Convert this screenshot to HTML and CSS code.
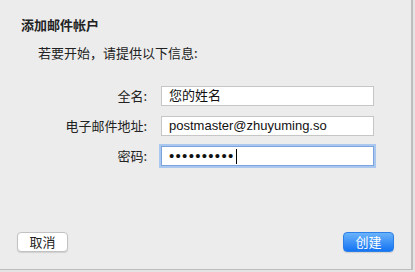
FILE: index.html
```html
<!DOCTYPE html>
<html lang="zh-CN">
<head>
  <meta charset="UTF-8" />
  <meta name="viewport" content="width=device-width, initial-scale=1.0"/>
  <title>添加邮件帐户</title>
  <link rel="stylesheet" href="styles.css">
</head>
<body>
  <div class="dialog">
    <div class="title">添加邮件帐户</div>
    <div class="intro">若要开始，请提供以下信息:</div>

    <div class="form">
      <div class="label">全名:</div>
      <div class="field">您的姓名</div>

      <div class="label">电子邮件地址:</div>
      <div class="field">postmaster@zhuyuming.so</div>

      <div class="label">密码:</div>
      <div class="field focus"><span class="dots">••••••••••</span><span class="caret"></span></div>
    </div>

    <div class="buttons">
      <button class="button">取消</button>
      <button class="button primary">创建</button>
    </div>
  </div>
</body>
</html>
```

FILE: styles.css
```css
body {
  margin: 0;
  background: #e4e4e4;
  font-family: "Noto Sans CJK SC", "Liberation Sans", sans-serif;
  color: #222;
}
.dialog {
  box-sizing: border-box;
  width: 413px;
  height: 270px;
  background: #ececec;
  border-right: 2px solid #bdbdbd;
  border-bottom: 1px solid #bdbdbd;
  padding: 16px 16px 17px 17px;
  display: flex;
  flex-direction: column;
}
.title {
  font-size: 13px;
  line-height: 18px;
  font-weight: bold;
  margin-left: 4px;
}
.intro {
  font-size: 13px;
  line-height: 18px;
  margin: 10px 0 0 21px;
}
.form {
  display: grid;
  grid-template-columns: 130px 213px;
  column-gap: 14px;
  row-gap: 10px;
  margin-top: 24px;
}
.label {
  font-size: 13px;
  line-height: 20px;
  text-align: right;
}
.field {
  box-sizing: border-box;
  height: 20px;
  background: #fff;
  border: 1px solid #c6c6c6;
  padding: 0 7px;
  font-family: "Liberation Sans", "Noto Sans CJK SC", sans-serif;
  font-size: 13px;
  line-height: 18px;
  color: #111;
  display: flex;
  align-items: center;
}
.field.focus {
  border-color: #7ba4dc;
  box-shadow: 0 0 0 2px #a9c7ef;
}
.dots {
  letter-spacing: 1.3px;
  font-size: 15px;
}
.caret {
  width: 1px;
  height: 15px;
  background: #000;
  margin-left: 1px;
}
.buttons {
  margin-top: auto;
  display: flex;
  justify-content: space-between;
}
.button {
  width: 51px;
  height: 20px;
  padding: 0;
  font-family: "Noto Sans CJK SC", sans-serif;
  font-size: 13px;
  line-height: 18px;
  color: #222;
  background: #fff;
  border: 1px solid #c2c2c2;
  border-radius: 4px;
  box-shadow: 0 1px 1px rgba(0, 0, 0, 0.12);
}
.button.primary {
  color: #fff;
  background: linear-gradient(#6ab3fb, #1474f3);
  border-color: #2d7fe8;
  margin-right: 1px;
}
```
